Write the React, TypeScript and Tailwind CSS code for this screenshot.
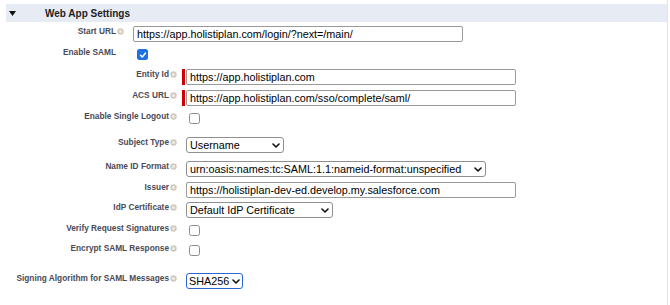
import React from 'react';

const Help = () => (
  <svg width="7" height="7" viewBox="0 0 7 7" className="shrink-0">
    <circle cx="3.5" cy="3.5" r="3.2" fill="#d2cbbb" />
    <circle cx="3.5" cy="3.5" r="1.5" fill="#efece4" />
  </svg>
);

const Chevron = () => (
  <svg width="8" height="5" viewBox="0 0 8 5" className="shrink-0">
    <path d="M1 1l3 3 3-3" fill="none" stroke="#111" strokeWidth="1.6" strokeLinecap="round" strokeLinejoin="round" />
  </svg>
);

const TextInput = ({ value, width }: { value: string; width: string }) => (
  <div className={`${width} h-[16px] flex items-center pl-[3px] border border-[#9a9a9a] rounded-[2px] bg-white text-[10.8px] text-black whitespace-nowrap overflow-hidden`}>
    {value}
  </div>
);

const Select = ({ value, width, focused }: { value: string; width: string; focused?: boolean }) => (
  <div
    className={`${width} h-[16px] flex items-center justify-between bg-white text-[10.8px] text-black whitespace-nowrap ${
      focused
        ? 'pl-[2px] pr-[2px] border-[1.5px] border-[#2a66d6] rounded-[3px]'
        : 'pl-[3px] pr-[3px] border border-[#8f8f8f] rounded-[3px]'
    }`}
  >
    <span>{value}</span>
    <Chevron />
  </div>
);

const Checkbox = ({ checked, className }: { checked?: boolean; className: string }) =>
  checked ? (
    <span className={`${className} w-[11px] h-[11px] rounded-[2.5px] bg-[#1f6fe5] flex items-center justify-center`}>
      <svg width="8" height="8" viewBox="0 0 8 8">
        <path d="M1.5 4.2l1.8 1.8 3.2-4" fill="none" stroke="#fff" strokeWidth="1.5" strokeLinecap="round" strokeLinejoin="round" />
      </svg>
    </span>
  ) : (
    <span className={`${className} w-[11px] h-[11px] rounded-[2.5px] border border-[#8c8c8c] bg-white`} />
  );

interface RowProps {
  label: string;
  help?: boolean;
  required?: boolean;
  height: string;
  children: React.ReactNode;
}

// outer block (Start URL / Enable SAML)
const OuterRow = ({ label, help, height, children }: RowProps) => (
  <div className={`flex items-start ${height}`}>
    <div className="w-[116px] h-[10px] flex items-center justify-end text-[8.3px] leading-[10px] font-bold text-[#4a4a56] whitespace-nowrap">
      {label}
    </div>
    <div className="ml-[1px] w-[7px] h-[10px] flex items-center">{help && <Help />}</div>
    <div className="ml-[9px] flex">{children}</div>
  </div>
);

// nested SAML block
const InnerRow = ({ label, help = true, required, height, children }: RowProps) => (
  <div className={`flex items-start ${height}`}>
    <div className="w-[169px] h-[10px] flex items-center justify-end text-[8.3px] leading-[10px] font-bold text-[#4a4a56] whitespace-nowrap">
      {label}
    </div>
    <div className="ml-[1px] w-[7px] h-[10px] flex items-center">{help && <Help />}</div>
    <div className="ml-[5px] w-[3px] h-[16px] mr-[1px]">{required && <div className="w-[3px] h-[16px] bg-[#cc0000]" />}</div>
    <div className="flex">{children}</div>
  </div>
);

export default function App() {
  return (
    <div className="w-[668px] h-[305px] bg-white border-r border-[#e4e4e4] font-['Liberation_Sans',Arial,sans-serif]">
      <div className="pt-[4px] pl-[6px]">
        <div className="h-[18px] bg-[#e7ebf4] flex items-center">
          <svg width="7" height="5" viewBox="0 0 7 5" className="ml-[3px]">
            <polygon points="0,0 7,0 3.5,5" fill="#111" />
          </svg>
          <span className="ml-[29px] text-[10px] font-bold text-[#1e1e1e]">Web App Settings</span>
        </div>
      </div>

      <div className="mt-[4px]">
        <OuterRow label="Start URL" help height="h-[21px]">
          <TextInput value="https://app.holistiplan.com/login/?next=/main/" width="w-[330px]" />
        </OuterRow>
        <OuterRow label="Enable SAML" height="h-[22px]">
          <Checkbox checked className="ml-[4px] mt-[2px]" />
        </OuterRow>

        <InnerRow label="Entity Id" required height="h-[21px]">
          <TextInput value="https://app.holistiplan.com" width="w-[330px]" />
        </InnerRow>
        <InnerRow label="ACS URL" required height="h-[21px]">
          <TextInput value="https://app.holistiplan.com/sso/complete/saml/" width="w-[330px]" />
        </InnerRow>
        <InnerRow label="Enable Single Logout" height="h-[26px]">
          <Checkbox className="ml-[3px] mt-[2px]" />
        </InnerRow>
        <InnerRow label="Subject Type" height="h-[24px]">
          <Select value="Username" width="w-[98px]" />
        </InnerRow>
        <InnerRow label="Name ID Format" height="h-[21px]">
          <Select value="urn:oasis:names:tc:SAML:1.1:nameid-format:unspecified" width="w-[300px]" />
        </InnerRow>
        <InnerRow label="Issuer" height="h-[20px]">
          <TextInput value="https://holistiplan-dev-ed.develop.my.salesforce.com" width="w-[330px]" />
        </InnerRow>
        <InnerRow label="IdP Certificate" height="h-[21px]">
          <Select value="Default IdP Certificate" width="w-[147px]" />
        </InnerRow>
        <InnerRow label="Verify Request Signatures" height="h-[20px]">
          <Checkbox className="ml-[3px] mt-[2px]" />
        </InnerRow>
        <InnerRow label="Encrypt SAML Response" height="h-[30px]">
          <Checkbox className="ml-[3px] mt-[2px]" />
        </InnerRow>
        <InnerRow label="Signing Algorithm for SAML Messages" height="h-[16px]">
          <Select value="SHA256" width="w-[57px]" focused />
        </InnerRow>
      </div>
    </div>
  );
}
